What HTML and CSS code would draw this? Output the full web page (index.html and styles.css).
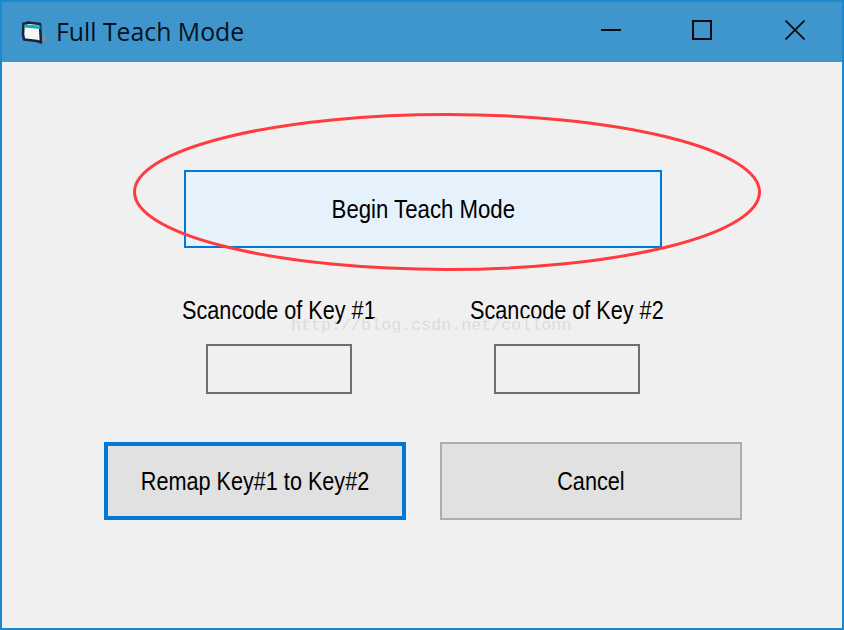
FILE: index.html
```html
<!DOCTYPE html>
<html lang="en">
<head>
<meta charset="utf-8">
<title>Full Teach Mode</title>
<link rel="stylesheet" href="styles.css">
</head>
<body>
<div class="window">
  <header class="titlebar">
    <svg class="app-icon" width="28" height="26" viewBox="0 0 28 26">
      <path d="M21 15l6 4.500-5 4.500z" fill="#7f8f9c"/>
      <path d="M3.500 4.500h3l1-1 12.500 1.500 1 18.500-4-1.500-13-1.500-1-5z" fill="#f6f7f7" stroke="#12263c" stroke-width="2.600" stroke-linejoin="round"/>
      <path d="M4.500 5.500l15.500 1 0.500 3.500-16-1.500z" fill="#10b4b8"/>
    </svg>
    <span class="title">Full Teach Mode</span>
    <div class="controls">
      <svg width="20" height="20" viewBox="0 0 20 20"><path d="M0 10h20" stroke="#0a0a0a" stroke-width="2"/></svg>
      <svg width="20" height="20" viewBox="0 0 20 20"><rect x="1" y="1" width="18" height="18" fill="none" stroke="#0a0a0a" stroke-width="2"/></svg>
      <svg class="close" width="20" height="20" viewBox="0 0 20 20"><path d="M0.500 0.500l19 19M19.500 0.500l-19 19" stroke="#0a0a0a" stroke-width="1.700"/></svg>
    </div>
  </header>
  <main class="form">
    <button class="btn btn-teach"><span class="narrow narrow-wide">Begin Teach Mode</span></button>
    <div class="fields">
      <div class="field"><label class="label narrow">Scancode of Key #1</label><div class="input"></div></div>
      <div class="field"><label class="label narrow">Scancode of Key #2</label><div class="input"></div></div>
    </div>
    <div class="actions">
      <button class="btn btn-action btn-default"><span class="narrow">Remap Key#1 to Key#2</span></button>
      <button class="btn btn-action btn-cancel"><span class="narrow">Cancel</span></button>
    </div>
    <svg class="oval" width="640" height="170" viewBox="0 0 640 170">
      <ellipse cx="320" cy="85" rx="312.500" ry="77.500" fill="none" stroke="#ff3b3f" stroke-width="3"/>
    </svg>
    <span class="watermark">http://blog.csdn.net/collonn</span>
  </main>
</div>
</body>
</html>
```
FILE: styles.css
```css
* { box-sizing: border-box; }
html, body { margin: 0; height: 100%; }
.window {
  width: 844px;
  height: 630px;
  border: 2px solid #1e88cc;
  display: flex;
  flex-direction: column;
  background: #f0f0f0;
  overflow: hidden;
}
.titlebar {
  height: 60px;
  background: #3f96cc;
  display: flex;
  align-items: center;
  padding-left: 18px;
  flex: none;
}
.app-icon { margin-right: 8px; }
.title {
  font-family: "Open Sans", "Noto Sans", sans-serif;
  font-size: 24.800px;
  line-height: 30px;
  margin-bottom: 2px;
  color: #06121c;
}
.controls {
  margin-left: auto;
  margin-bottom: 4px;
  display: flex;
  gap: 71px;
  padding-right: 37px;
}
.close { margin-left: 2px; }
.form {
  position: relative;
  flex: 1;
  padding-top: 108px;
  font-family: "Liberation Sans", Arial, sans-serif;
  font-size: 25px;
  color: #000;
}
.narrow {
  display: inline-block;
  white-space: nowrap;
  transform: scaleX(0.865);
}
.narrow-wide { transform: scaleX(0.888); }
.btn {
  display: block;
  font: inherit;
  color: #000;
  padding: 0;
  border-style: solid;
}
.btn-teach {
  margin-left: 182px;
  width: 478px;
  height: 78px;
  border-width: 2px;
  border-color: #0078d7;
  background: #e5f1fb;
}
.fields {
  display: flex;
  gap: 48px;
  margin: 48px 0 0 157px;
}
.field {
  width: 240px;
  display: flex;
  flex-direction: column;
  align-items: center;
}
.label { line-height: 28px; }
.input {
  width: 146px;
  height: 50px;
  margin-top: 20px;
  border: 2px solid #6e6e6e;
}
.actions {
  display: flex;
  gap: 34px;
  margin: 48px 0 0 102px;
}
.btn-action {
  width: 302px;
  height: 78px;
  background: #e1e1e1;
}
.btn-default { border-width: 4px; border-color: #0078d7; }
.btn-cancel { border-width: 2px; border-color: #adadad; }
.oval {
  position: absolute;
  left: 125px;
  top: 45px;
  pointer-events: none;
}
.watermark {
  position: absolute;
  left: 289px;
  top: 254px;
  font-family: "Liberation Mono", monospace;
  font-size: 16.700px;
  color: #dcdcdc;
  white-space: nowrap;
}
```
